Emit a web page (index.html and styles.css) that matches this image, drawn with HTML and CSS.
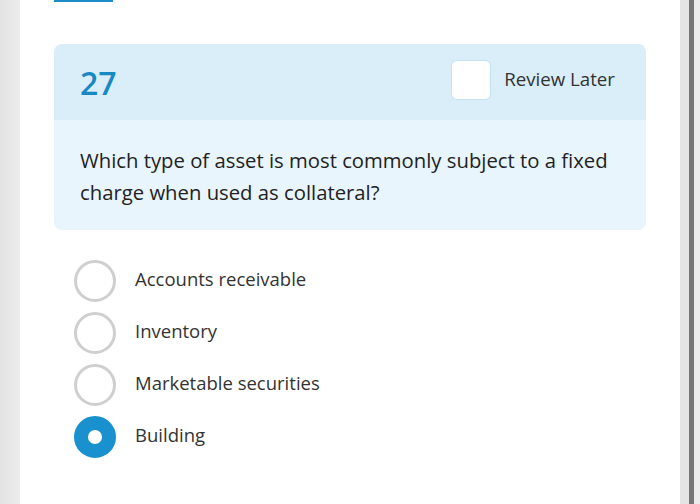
FILE: index.html
```html
<!DOCTYPE html>
<html>
<head>
<meta charset="utf-8">
<link rel="stylesheet" href="styles.css">
</head>
<body>
<div class="frame">
  <div class="edge-left"></div>
  <main class="page">
    <div class="tab-mark"></div>
    <section class="card">
      <header class="card-head">
        <span class="qnum">27</span>
        <label class="review">
          <span class="box"></span>
          <span class="review-text">Review Later</span>
        </label>
      </header>
      <div class="card-body">
        <p class="question">Which type of asset is most commonly subject to a fixed charge when used as collateral?</p>
      </div>
    </section>
    <ul class="options">
      <li class="option"><span class="radio"></span><span class="opt-text">Accounts receivable</span></li>
      <li class="option"><span class="radio"></span><span class="opt-text">Inventory</span></li>
      <li class="option"><span class="radio"></span><span class="opt-text">Marketable securities</span></li>
      <li class="option"><span class="radio checked"></span><span class="opt-text">Building</span></li>
    </ul>
  </main>
  <div class="edge-right">
    <div class="er-a"></div>
    <div class="er-b"></div>
    <div class="er-c"></div>
  </div>
</div>
</body>
</html>
```
FILE: styles.css
```css
html, body {
  margin: 0;
  padding: 0;
  background: #ffffff;
}
body {
  font-family: "Open Sans", "Noto Sans", sans-serif;
  width: 700px;
  height: 504px;
  overflow: hidden;
}
.frame {
  display: flex;
  width: 700px;
  height: 504px;
}
.edge-left {
  width: 20px;
  flex: none;
  background: linear-gradient(to right, #e3e3e3, #ececec);
}
.page {
  flex: 1;
  background: #ffffff;
  padding: 0 34px 0 34px;
  box-sizing: border-box;
}
.tab-mark {
  width: 59px;
  height: 2px;
  background: #1b8cc6;
}
.card {
  margin-top: 42px;
  border-radius: 8px;
  overflow: hidden;
}
.card-head {
  background: #d9eef8;
  height: 76px;
  display: flex;
  align-items: center;
  justify-content: space-between;
  padding: 0 31px 0 26px;
}
.qnum {
  font-size: 32px;
  font-weight: 600;
  color: #1889c2;
  line-height: 1;
  margin-top: 1px;
}
.review {
  display: flex;
  align-items: center;
  margin-bottom: 4px;
}
.box {
  width: 40px;
  height: 40px;
  box-sizing: border-box;
  background: #ffffff;
  border: 1px solid #c5e2f1;
  border-radius: 6px;
  margin-right: 13px;
}
.review-text {
  font-size: 18.7px;
  color: #333333;
  margin-top: -4px;
}
.card-body {
  background: #e8f5fc;
  height: 110px;
  padding: 24px 26px 0 26px;
  box-sizing: border-box;
}
.question {
  margin: 0;
  font-size: 20.3px;
  line-height: 32px;
  color: #222222;
}
.options {
  list-style: none;
  margin: 30px 0 0 0;
  padding: 0 0 0 20px;
  display: flex;
  flex-direction: column;
  gap: 10px;
}
.option {
  display: flex;
  align-items: center;
  height: 42px;
}
.radio {
  width: 42px;
  height: 42px;
  box-sizing: border-box;
  border: 3px solid #cfcfcf;
  border-radius: 50%;
  background: #ffffff;
  margin-right: 19px;
  flex: none;
}
.radio.checked {
  border: 14px solid #1991cf;
  background: #ffffff;
}
.opt-text {
  font-size: 18.5px;
  color: #333333;
  margin-top: -5px;
}
.edge-right {
  width: 20px;
  flex: none;
  display: flex;
}
.er-a {
  width: 9px;
  background: #e4e4e4;
}
.er-b {
  width: 5px;
  background: #767676;
}
.er-c {
  width: 6px;
  background: #ececec;
}
```
